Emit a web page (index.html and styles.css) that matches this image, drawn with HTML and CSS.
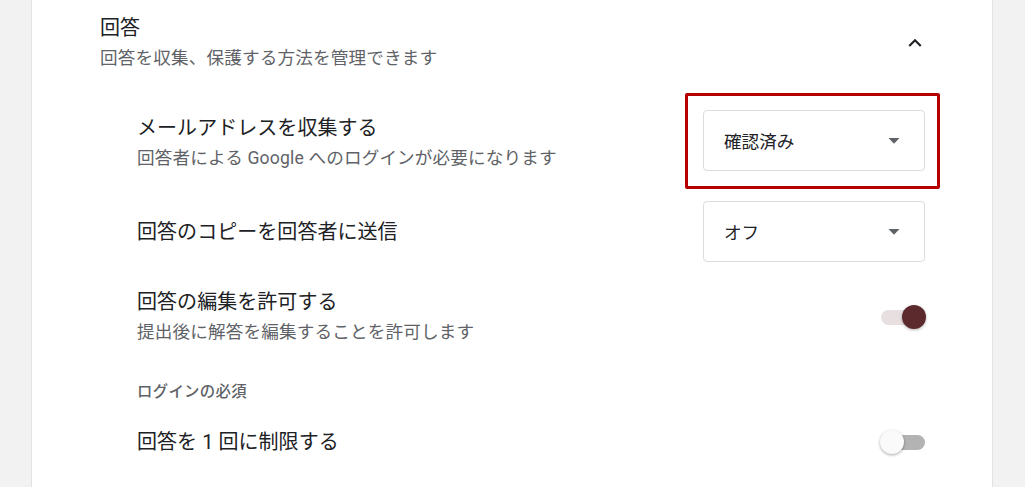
FILE: index.html
```html
<!DOCTYPE html>
<html lang="ja">
<head>
<meta charset="utf-8">
<title>回答の設定</title>
<link rel="stylesheet" href="styles.css">
</head>
<body>
<div class="page">
  <section class="card">
    <header class="section-head">
      <div class="head-text">
        <div class="head-title">回答</div>
        <div class="head-desc">回答を収集、保護する方法を管理できます</div>
      </div>
      <svg class="chevron" viewBox="0 0 24 24" width="26" height="26" aria-hidden="true"><path d="M12 8l-6 6 1.41 1.41L12 10.83l4.59 4.58L18 14z" fill="#202124"/></svg>
    </header>

    <div class="row row-email">
      <div class="row-text">
        <div class="row-title">メールアドレスを収集する</div>
        <div class="row-desc">回答者による Google へのログインが必要になります</div>
      </div>
      <div class="select highlighted">
        <span class="select-value">確認済み</span>
        <svg class="select-arrow" viewBox="0 0 12 6" width="12" height="6" aria-hidden="true"><path d="M0.5 0h11L6 5.8z" fill="#5f6368"/></svg>
        <span class="highlight-box"></span>
      </div>
    </div>

    <div class="row row-copy">
      <div class="row-text">
        <div class="row-title">回答のコピーを回答者に送信</div>
      </div>
      <div class="select">
        <span class="select-value">オフ</span>
        <svg class="select-arrow" viewBox="0 0 12 6" width="12" height="6" aria-hidden="true"><path d="M0.5 0h11L6 5.8z" fill="#5f6368"/></svg>
      </div>
    </div>

    <div class="row row-edit">
      <div class="row-text">
        <div class="row-title">回答の編集を許可する</div>
        <div class="row-desc">提出後に解答を編集することを許可します</div>
      </div>
      <div class="switch on"><span class="track"></span><span class="thumb"></span></div>
    </div>

    <div class="group-label">ログインの必須</div>

    <div class="row row-limit">
      <div class="row-text">
        <div class="row-title">回答を 1 回に制限する</div>
      </div>
      <div class="switch"><span class="track"></span><span class="thumb"></span></div>
    </div>
  </section>
</div>
</body>
</html>
```

FILE: styles.css
```css
html, body {
  margin: 0;
  padding: 0;
}
body {
  background: #f3f2f2;
  font-family: Roboto, "Noto Sans CJK JP", sans-serif;
  color: #202124;
  height: 487px;
  overflow: hidden;
}
.page {
  padding-left: 31px;
}
.card {
  width: 962px;
  height: 487px;
  background: #ffffff;
  border-left: 1px solid #e3e1e1;
  border-right: 1px solid #e3e1e1;
  padding: 0 67px 0 0;
  box-sizing: border-box;
}
.section-head {
  display: flex;
  align-items: center;
  justify-content: space-between;
  padding: 16px 0 0 68px;
}
.head-title {
  font-size: 20px;
  line-height: 24px;
  color: #202124;
}
.head-desc {
  margin-top: 6px;
  font-size: 17.6px;
  line-height: 24px;
  letter-spacing: 0.15px;
  color: #5f6368;
}
.chevron {
  display: block;
  margin-right: -3px;
}
.row {
  display: flex;
  justify-content: space-between;
  padding-left: 105px;
}
.row-title {
  font-size: 20px;
  line-height: 24px;
  letter-spacing: 0.05px;
  color: #202124;
}
.row-desc {
  margin-top: 6px;
  font-size: 17.6px;
  line-height: 24px;
  letter-spacing: 0.15px;
  color: #5f6368;
}
.row-email {
  margin-top: 40px;
  align-items: flex-start;
}
.row-email .row-text {
  padding-top: 6px;
}
.row-copy {
  margin-top: 30px;
  align-items: center;
}
.row-edit {
  margin-top: 28px;
  align-items: center;
}
.row-limit {
  margin-top: 28px;
  align-items: center;
}
.group-label {
  margin-top: 38px;
  padding-left: 105px;
  font-size: 15.4px;
  line-height: 20px;
  font-weight: 500;
  letter-spacing: 0.3px;
  color: #5f6368;
}
.select {
  position: relative;
  width: 222px;
  height: 61px;
  box-sizing: border-box;
  border: 1px solid #dadce0;
  border-radius: 4px;
  display: flex;
  align-items: center;
  justify-content: space-between;
  padding: 0 24px 0 20px;
}
.select-value {
  font-size: 17.6px;
  color: #202124;
}
.select-arrow {
  display: block;
}
.highlight-box {
  position: absolute;
  left: -19px;
  right: -16px;
  top: -18px;
  bottom: -19px;
  border: 3px solid #b50000;
  border-radius: 2px;
  pointer-events: none;
}
.switch {
  position: relative;
  width: 46px;
  height: 24px;
  margin-right: -1px;
}
.switch .track {
  position: absolute;
  left: 1px;
  right: 1px;
  top: 4.5px;
  height: 15px;
  border-radius: 8px;
  background: #b3b3b3;
}
.switch .thumb {
  position: absolute;
  top: 0;
  left: 0;
  width: 24px;
  height: 24px;
  border-radius: 50%;
  background: #fafafa;
  box-shadow: 0 1px 3px rgba(0, 0, 0, 0.35);
}
.switch.on .track {
  background: #e7dfe0;
}
.switch.on .thumb {
  left: auto;
  right: 0;
  background: #5c2a2d;
  box-shadow: 0 1px 3px rgba(0, 0, 0, 0.3);
}
```
